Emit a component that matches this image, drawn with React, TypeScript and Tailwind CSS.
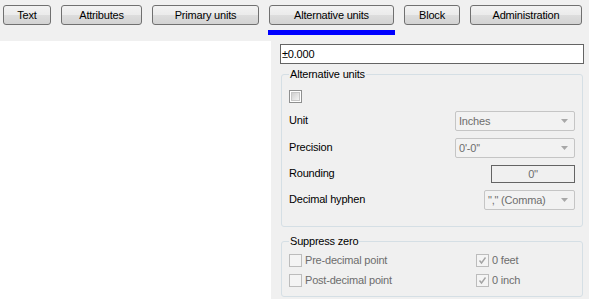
const tabs = [
    { label: 'Text', cls: 'w-[48px]' },
    { label: 'Attributes', cls: 'w-[81px]' },
    { label: 'Primary units', cls: 'w-[107px]' },
    { label: 'Alternative units', cls: 'w-[125px]', active: true },
    { label: 'Block', cls: 'w-[56px]' },
    { label: 'Administration', cls: 'w-[112px]' },
];

function Check({ checked, enabled }: { checked?: boolean, enabled?: boolean }) {
    if (enabled) {
        return (
            <span className="flex h-[13px] w-[13px] shrink-0 border border-[#8e8f8f] bg-white p-px">
                <span className="h-full w-full border border-[#c6c6c6] bg-[linear-gradient(135deg,#cfcfcf,#f4f4f4)]" />
            </span>
        );
    }
    return (
        <span className="flex h-[13px] w-[13px] shrink-0 items-center justify-center border border-[#bcbcbc] bg-[#f4f4f4]">
            {checked ? (
                <svg width="11" height="11" viewBox="0 0 11 11">
                    <path d="M2.5 5.5 L4.5 8 L8.5 2.5" fill="none" stroke="#a4a4a4" strokeWidth="1.4" />
                </svg>
            ) : null}
        </span>
    );
}

function Combo({ value, cls }: { value: string, cls: string }) {
    return (
        <div className={`flex h-[20px] items-center justify-between rounded-[2px] border border-[#c5c5c5] bg-[#f2f2f2] pl-[3px] pr-[6px] text-[#6d6d6d] ${cls}`}>
            <span>{value}</span>
            <svg width="7" height="4" viewBox="0 0 7 4">
                <path d="M0 0 H7 L3.5 4 Z" fill="#a8a8a8" />
            </svg>
        </div>
    );
}

function Row({ label, children, h = 'h-[20px]' }: { label: string, children: any, h?: string }) {
    return (
        <div className={`flex items-center justify-between ${h}`}>
            <span className="-mt-[2px] text-black">{label}</span>
            {children}
        </div>
    );
}

export default function App() {
    return (
        <div className="h-[299px] w-[589px] overflow-hidden bg-[#f0f0f0] text-[11px] leading-[13px] tracking-[-0.2px] text-black" style={{ fontFamily: '"Liberation Sans", Arial, sans-serif' }}>
            <div className="flex gap-[10px] pl-[3px] pt-[5px]">
                {tabs.map((t, i) => (
                    <div key={i} className={`flex flex-col ${t.cls}`}>
                        <button className="flex h-[20px] w-full items-center justify-center rounded-[3px] border border-[#707070] bg-[linear-gradient(#f2f2f2_0%,#ebebeb_50%,#dddddd_50%,#d3d3d3_100%)] text-black">
                            {t.label}
                        </button>
                        <div className={`-mx-px mt-[5px] h-[5px] ${t.active ? 'bg-[#0000ff]' : ''}`} />
                    </div>
                ))}
            </div>

            <div className="mt-[6px] flex h-[258px]">
                <div className="h-full w-[271px] bg-white" />
                <div className="ml-[9px] flex w-[304px] flex-col pt-[3px]">
                    <div className="flex h-[20px] items-center border border-[#646464] bg-white pl-[1px]">±0.000</div>

                    <fieldset className="ml-px mt-[4px] h-[159px] w-[302px] rounded-[3px] border border-[#d5dfe5] pl-[7px] pr-[7px]">
                        <legend className="px-[1px]">Alternative units</legend>
                        <div className="mt-[9px]">
                            <Check enabled />
                        </div>
                        <div className="mt-[8px] flex flex-col gap-[7px]">
                            <Row label="Unit"><Combo value="Inches" cls="w-[120px]" /></Row>
                            <Row label="Precision"><Combo value={"0'-0''"} cls="w-[120px]" /></Row>
                            <Row label="Rounding" h="h-[18px]">
                                <div className="flex h-[18px] w-[84px] items-center justify-center border border-[#646464] bg-[#f0f0f0] text-[#6d6d6d]">0''</div>
                            </Row>
                            <Row label="Decimal hyphen"><Combo value={'"," (Comma)'} cls="w-[91px]" /></Row>
                        </div>
                    </fieldset>

                    <fieldset className="ml-px mt-[8px] h-[62px] w-[302px] rounded-[3px] border border-[#d5dfe5] pl-[7px] pr-[7px]">
                        <legend className="px-[1px]">Suppress zero</legend>
                        <div className="mt-[6px] grid grid-cols-[187px_1fr] gap-y-[7px] text-[#6d6d6d]">
                            <div className="flex items-center gap-[3px]"><Check /><span>Pre-decimal point</span></div>
                            <div className="flex items-center gap-[3px]"><Check checked /><span>0 feet</span></div>
                            <div className="flex items-center gap-[3px]"><Check /><span>Post-decimal point</span></div>
                            <div className="flex items-center gap-[3px]"><Check checked /><span>0 inch</span></div>
                        </div>
                    </fieldset>
                </div>
            </div>
        </div>
    );
}
